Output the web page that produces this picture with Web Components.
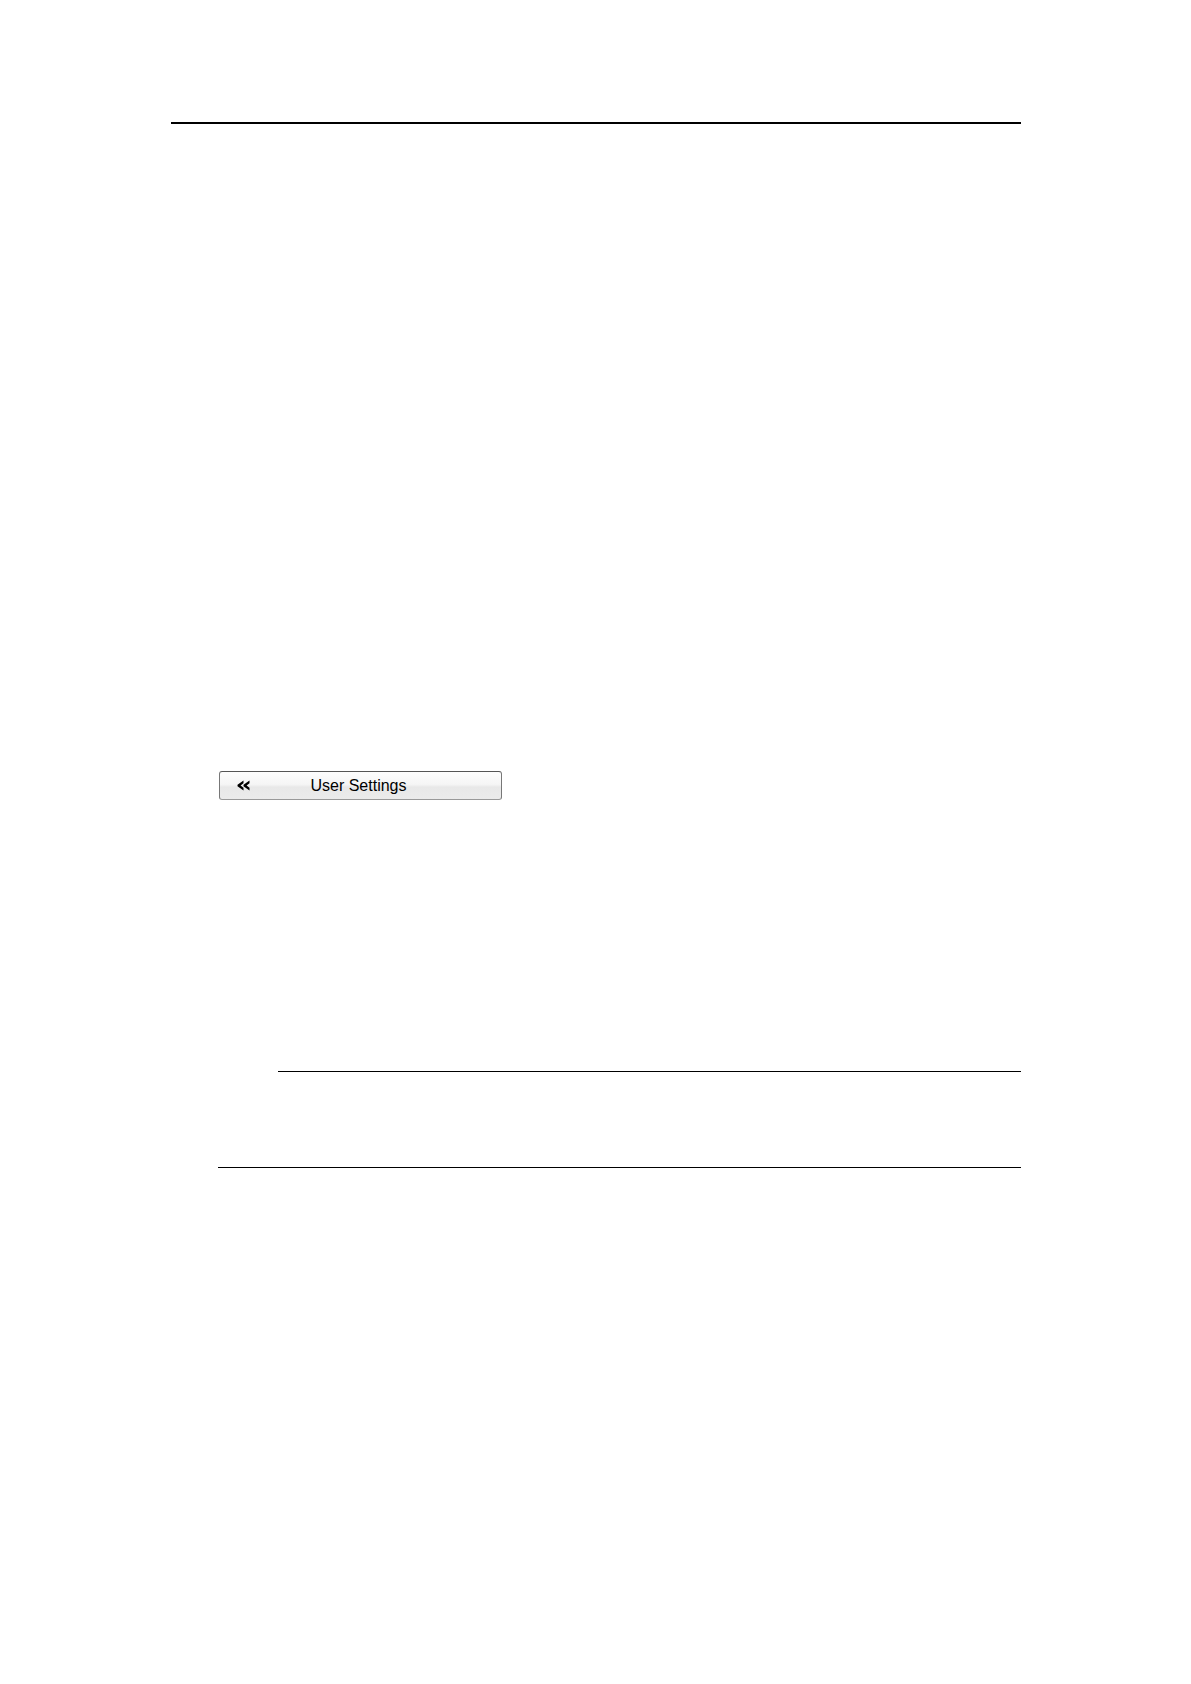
<!DOCTYPE html>
<html lang="en">
<head>
<meta charset="utf-8">
<meta name="viewport" content="width=device-width, initial-scale=1">
<title>User Settings</title>
<style>
  html { background: #fff; }
  body { margin: 0; font-family: "Liberation Sans", Arial, sans-serif; color: #000; }
</style>
</head>
<body>

<manual-page>
  <page-rule slot="header" weight="heavy"></page-rule>
  <menu-button>User Settings</menu-button>
  <note-block></note-block>
</manual-page>

<script>
  /* Page sheet: margins, header slot and an indented body column */
  class ManualPage extends HTMLElement {
    constructor() {
      super();
      this.attachShadow({ mode: 'open' }).innerHTML = `
        <style>
          :host {
            display: block;
            box-sizing: border-box;
            min-height: 100vh;
            padding: 122px 170px 96px 171px;
          }
          main {
            display: flex;
            flex-direction: column;
            gap: 271px;
            padding: 647px 0 0 47px;
          }
        </style>
        <header><slot name="header"></slot></header>
        <main><slot></slot></main>
      `;
    }
  }

  /* Horizontal line, weight="heavy" for the page header */
  class PageRule extends HTMLElement {
    constructor() {
      super();
      this.attachShadow({ mode: 'open' }).innerHTML = `
        <style>
          :host { display: block; }
          hr { margin: 0; border: 0; height: 1px; background: #000; }
          :host([weight="heavy"]) hr { height: 2px; }
        </style>
        <hr>
      `;
    }
  }

  class MenuButton extends HTMLElement {
    constructor() {
      super();
      this.attachShadow({ mode: 'open' }).innerHTML = `
        <style>
          :host { display: block; padding-left: 1px; }
          button {
            display: grid;
            grid-template-columns: 30px 1fr 34px;
            align-items: center;
            box-sizing: border-box;
            width: 283px;
            max-width: 100%;
            height: 29px;
            margin: 0;
            padding: 0;
            border: 1px solid #777;
            border-top-color: #555;
            border-bottom-color: #999;
            border-radius: 3px;
            background: linear-gradient(#fdfdfd 0%, #f5f5f5 46%, #e8e8e8 56%, #ebebeb 100%);
            color: inherit;
            font: 16px/20px "Liberation Sans", Arial, sans-serif;
            cursor: pointer;
          }
          button:focus-visible { outline: 2px solid #36c; outline-offset: 2px; }
          svg { display: block; justify-self: end; }
        </style>
        <button type="button">
          <svg width="13" height="11" viewBox="0 0 13 11" fill="#000" aria-hidden="true">
            <path d="M6.500 .5v2.700L3.600 5.500l2.900 2.300v2.700L.5 6.200V4.800zM12.500 .5v2.700L9.600 5.500l2.900 2.300v2.700l-6-4.300V4.800z"/>
          </svg>
          <span><slot></slot></span>
        </button>
      `;
    }
  }

  /* Note area: short line above, full line below */
  class NoteBlock extends HTMLElement {
    constructor() {
      super();
      this.attachShadow({ mode: 'open' }).innerHTML = `
        <style>
          :host { display: grid; gap: 95px; }
          .top { margin-left: 60px; }
        </style>
        <page-rule class="top"></page-rule>
        <page-rule></page-rule>
      `;
    }
  }

  customElements.define('manual-page', ManualPage);
  customElements.define('page-rule', PageRule);
  customElements.define('menu-button', MenuButton);
  customElements.define('note-block', NoteBlock);
</script>
</body>
</html>
